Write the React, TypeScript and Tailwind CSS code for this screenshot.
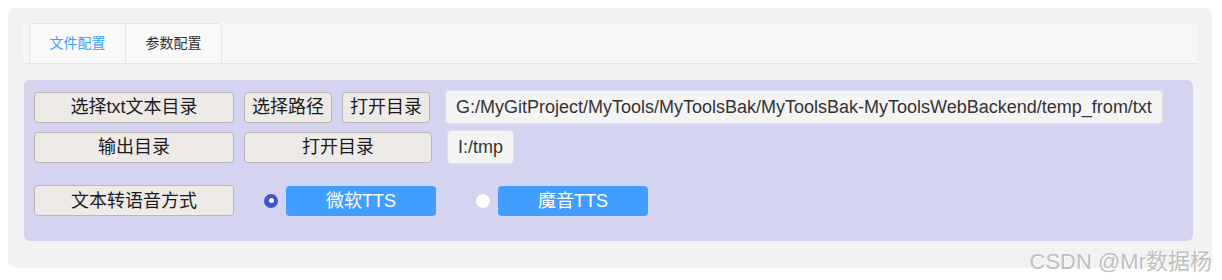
import React from 'react';

const font = "font-['Liberation_Sans','Noto_Sans_CJK_SC',sans-serif]";

const Btn = ({ label, w }: { label: string; w: string }) => (
  <button
    className={`${w} h-[31px] shrink-0 rounded-[4px] border border-[#bdb6b1] bg-[#eeeae8] text-[18px] leading-none text-[#1c1c1c]`}
  >
    {label}
  </button>
);

const PathBox = ({ value, w }: { value: string; w: string }) => (
  <div
    className={`${w} flex h-[34px] shrink-0 items-center rounded-[4px] border border-[#e2e2e2] bg-[#f4f4f4] px-[10px] text-[18px] text-[#333] whitespace-nowrap`}
  >
    {value}
  </div>
);

const Radio = ({ checked }: { checked: boolean }) =>
  checked ? (
    <span className="flex h-[14px] w-[14px] items-center justify-center rounded-full bg-[#3b55cf]">
      <span className="h-[5px] w-[5px] rounded-full bg-white" />
    </span>
  ) : (
    <span className="h-[14px] w-[14px] rounded-full bg-white" />
  );

const TtsOption = ({ label, checked }: { label: string; checked: boolean }) => (
  <div className="flex items-center gap-[8px]">
    <Radio checked={checked} />
    <button className="h-[30px] w-[150px] rounded-[4px] bg-[#409eff] text-[18px] leading-none text-white">
      {label}
    </button>
  </div>
);

export default function App() {
  return (
    <div className={`relative h-[280px] w-[1222px] bg-white p-[8px] ${font}`}>
      <div className="h-[260px] w-[1204px] rounded-[8px] bg-[#f2f2f2] px-[15px] pt-[15px]">
        {/* tabs */}
        <div className="flex h-[41px] border-b border-[#e4e4e4] bg-[#f7f7f7] pl-[6px]">
          <div className="flex w-[96px] items-center justify-center rounded-tl-[4px] border-l border-t border-[#e4e4e4] bg-[#f9f9f9] text-[14px] text-[#409eff]">
            文件配置
          </div>
          <div className="flex w-[97px] items-center justify-center rounded-tr-[4px] border-x border-t border-[#e4e4e4] bg-[#f9f9f9] text-[14px] text-[#303133]">
            参数配置
          </div>
        </div>

        {/* panel */}
        <div className="ml-[1px] mt-[16px] w-[1169px] rounded-[6px] bg-[#d4d4f0] pl-[10px] pt-[10px] pb-[25px]">
          <div className="flex items-center">
            <Btn label="选择txt文本目录" w="w-[200px]" />
            <div className="w-[10px]" />
            <Btn label="选择路径" w="w-[88px]" />
            <div className="w-[10px]" />
            <Btn label="打开目录" w="w-[88px]" />
            <div className="w-[15px]" />
            <PathBox
              value="G:/MyGitProject/MyTools/MyToolsBak/MyToolsBak-MyToolsWebBackend/temp_from/txt"
              w="w-[718px]"
            />
          </div>
          <div className="mt-[6px] flex items-center">
            <Btn label="输出目录" w="w-[200px]" />
            <div className="w-[10px]" />
            <Btn label="打开目录" w="w-[188px]" />
            <div className="w-[15px]" />
            <PathBox value="I:/tmp" w="w-[67px]" />
          </div>
          <div className="mt-[21px] flex items-center">
            <Btn label="文本转语音方式" w="w-[200px]" />
            <div className="w-[30px]" />
            <TtsOption label="微软TTS" checked />
            <div className="w-[40px]" />
            <TtsOption label="魔音TTS" checked={false} />
          </div>
        </div>
      </div>

      <div className="absolute bottom-[7px] right-[10px] text-[22px] leading-none text-[#bfbfbf] [text-shadow:1px_1px_0_#ffffff]">
        CSDN @Mr数据杨
      </div>
    </div>
  );
}
